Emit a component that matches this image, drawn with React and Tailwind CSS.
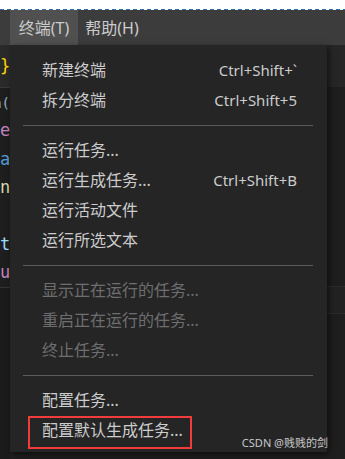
import React from "react";

const groups = [
  [
    { label: "新建终端", key: "Ctrl+Shift+`" },
    { label: "拆分终端", key: "Ctrl+Shift+5" },
  ],
  [
    { label: "运行任务..." },
    { label: "运行生成任务...", key: "Ctrl+Shift+B" },
    { label: "运行活动文件" },
    { label: "运行所选文本" },
  ],
  [
    { label: "显示正在运行的任务...", disabled: true },
    { label: "重启正在运行的任务...", disabled: true },
    { label: "终止任务...", disabled: true },
  ],
  [
    { label: "配置任务..." },
    { label: "配置默认生成任务...", marked: true },
  ],
];

const codeRows = [
  { ch: "n(", cls: "text-[#8fb4c9] text-[14px] justify-end", h: "h-[28px]" },
  { ch: "e", cls: "text-[#c586c0]", h: "h-[29px]" },
  { ch: "a", cls: "text-[#569cd6]", h: "h-[29px]" },
  { ch: "n", cls: "text-[#dcdcaa]", h: "h-[29px]" },
  { ch: "", cls: "", h: "h-[28px]" },
  { ch: "t", cls: "text-[#9cdcfe]", h: "h-[29px]" },
  { ch: "u", cls: "text-[#c586c0]", h: "h-[29px]" },
];

function MenuItem({ item }) {
  return (
    <div
      className={`relative h-[30px] flex items-center justify-between pl-[32px] pr-[30px] ${
        item.disabled ? "text-[#6e6e6e]" : "text-[#cccccc]"
      }`}
    >
      <span>{item.label}</span>
      {item.key && <span className="text-[15px]">{item.key}</span>}
      {/* annotation box */}
      {item.marked && (
        <div className="absolute left-[18px] top-[1px] w-[164px] h-[33px] border-2 border-[#f23b3b]" />
      )}
    </div>
  );
}

export default function App() {
  return (
    <div className="relative w-[345px] h-[459px] overflow-hidden bg-[#1e1e1e] font-['Segoe_UI','Noto_Sans','Noto_Sans_CJK_SC',sans-serif] text-[16px]">
      {/* top white margin + dashed line */}
      <div className="h-[9px] bg-white" />
      <div className="h-px bg-[repeating-linear-gradient(90deg,#2e6db4_0_4px,#ffffff_4px_7px)]" />

      {/* menu bar */}
      <div className="h-[35px] flex items-stretch bg-[#3c3c3c] text-[#cccccc]">
        <div className="w-[10px]" />
        <div className="w-[68px] flex items-center justify-center bg-[#505050]">终端(T)</div>
        <div className="w-[68px] flex items-center justify-center">帮助(H)</div>
      </div>

      <div className="flex h-[414px]">
        {/* editor strip on the left */}
        <div className="w-[10px] flex flex-col overflow-hidden font-['DejaVu_Sans_Mono',monospace] text-[17px] leading-none">
          <div className="h-[42px] bg-[#2a2a2a] flex items-center text-[#ffd700]">{"}"}</div>
          <div className="h-px bg-[#3a3a3a]" />
          <div className="h-[199px] flex flex-col pt-px">
            {codeRows.map((r, i) => (
              <div key={i} className={`${r.h} flex items-center whitespace-nowrap ${r.cls}`}>
                {r.ch}
              </div>
            ))}
          </div>
          <div className="h-px bg-[#333333]" />
          <div className="flex-1 bg-[#1b1b1b]" />
        </div>

        {/* dropdown menu */}
        <div className="w-[317px] h-[407px] bg-[#252526] pt-[10px] pb-[7px] shadow-[2px_2px_6px_rgba(0,0,0,0.55)] z-10">
          {groups.map((g, gi) => (
            <div key={gi}>
              {gi > 0 && (
                <div className="h-[20px] flex items-center pl-[13px] pr-[14px]">
                  <div className="h-px w-full bg-[#5c5c5c]" />
                </div>
              )}
              {g.map((item) => (
                <MenuItem key={item.label} item={item} />
              ))}
            </div>
          ))}
        </div>

        {/* right strip */}
        <div className="flex-1 flex flex-col">
          <div className="h-[42px] bg-[#262626]" />
          <div className="h-[199px] bg-[#1e1e1e]" />
          <div className="h-px bg-[#2c2c2c]" />
          <div className="h-[26px] bg-[#222222]" />
          <div className="h-px bg-[#2c2c2c]" />
          <div className="flex-1 bg-[#1e1e1e]" />
        </div>
      </div>

      {/* watermark */}
      <div className="absolute right-[17px] bottom-[8px] text-[11px] text-[#c8c8c8] z-20">
        CSDN @贱贱的剑
      </div>
    </div>
  );
}
